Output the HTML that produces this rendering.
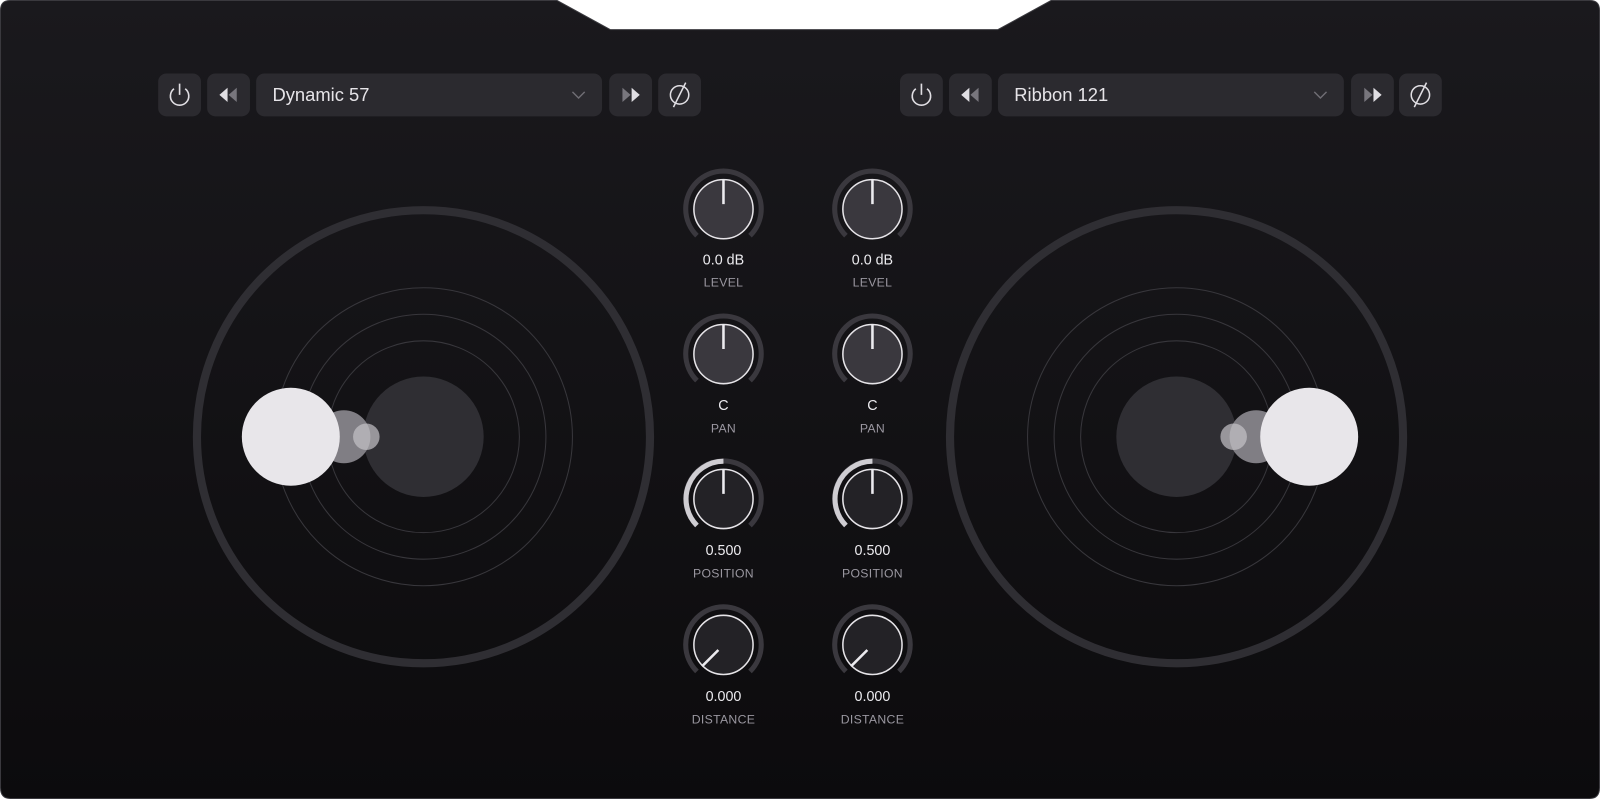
<!DOCTYPE html>
<html><head><style>
html,body{margin:0;padding:0;background:#fff;width:1600px;height:799px;overflow:hidden;font-family:"Liberation Sans",sans-serif}
#w{position:absolute;left:0;top:0;width:1568px;height:783px;transform:scale(1.020408);transform-origin:0 0}
.btn{position:absolute;top:72px;height:42px;background:#2b2a2f;border-radius:8px}
.dd{color:#e6e4e8;font-size:18px;line-height:42px;padding-left:16px;box-sizing:border-box}
.val{position:absolute;width:120px;text-align:center;color:#ecebef;font-size:14px}
.lab{position:absolute;width:120px;text-align:center;color:#9a97a0;font-size:12px;letter-spacing:0.3px}
</style></head><body><div id="w">
<svg width="1568" height="783" style="position:absolute;left:0;top:0">
<defs><linearGradient id="bg" x1="0" y1="0" x2="0" y2="1"><stop offset="0" stop-color="#1a191d"/><stop offset="1" stop-color="#0c0b0d"/></linearGradient></defs>
<path d="M10 0.5 H546 L598 29 H978 L1030 0.5 H1558 Q1567.5 0.5 1567.5 10 V772 Q1567.5 782.5 1558 782.5 H10 Q0.5 782.5 0.5 772 V10 Q0.5 0.5 10 0.5Z" fill="url(#bg)" stroke="#3a393e"/>
<g fill="none">
<circle cx="415" cy="428" r="222" stroke="#2f2e33" stroke-width="8"/>
<circle cx="415" cy="428" r="146" stroke="#38373c" stroke-width="1"/>
<circle cx="415" cy="428" r="120" stroke="#38373c" stroke-width="1"/>
<circle cx="415" cy="428" r="94" stroke="#38373c" stroke-width="1"/>
<circle cx="1153" cy="428" r="222" stroke="#2f2e33" stroke-width="8"/>
<circle cx="1153" cy="428" r="146" stroke="#38373c" stroke-width="1"/>
<circle cx="1153" cy="428" r="120" stroke="#38373c" stroke-width="1"/>
<circle cx="1153" cy="428" r="94" stroke="#38373c" stroke-width="1"/>
</g>
<circle cx="415" cy="428" r="59" fill="#2f2e33"/>
<circle cx="337" cy="428" r="26" fill="#807e84"/>
<circle cx="285" cy="428" r="48" fill="#e8e6ea"/>
<circle cx="359" cy="428" r="13" fill="#c5c3c8" opacity="0.7"/>
<circle cx="1153" cy="428" r="59" fill="#2f2e33"/>
<circle cx="1231" cy="428" r="26" fill="#807e84"/>
<circle cx="1283" cy="428" r="48" fill="#e8e6ea"/>
<circle cx="1209" cy="428" r="13" fill="#c5c3c8" opacity="0.7"/>
<g fill="none" stroke-width="5">
<g stroke="#3a383e">
<path d="M683 231 A37 37 0 1 1 735 231"/><path d="M829 231 A37 37 0 1 1 881 231"/>
<path d="M683 373 A37 37 0 1 1 735 373"/><path d="M829 373 A37 37 0 1 1 881 373"/>
<path d="M683 515 A37 37 0 1 1 735 515"/><path d="M829 515 A37 37 0 1 1 881 515"/>
<path d="M683 658 A37 37 0 1 1 735 658"/><path d="M829 658 A37 37 0 1 1 881 658"/>
</g>
<g stroke="#cfcdd2"><path d="M683 515 A37 37 0 0 1 709 452"/><path d="M829 515 A37 37 0 0 1 855 452"/></g>
</g>
<g stroke="#e6e4e8" stroke-width="1.5">
<circle cx="709" cy="205" r="29" fill="#3a383e"/><circle cx="855" cy="205" r="29" fill="#3a383e"/>
<circle cx="709" cy="347" r="29" fill="#3a383e"/><circle cx="855" cy="347" r="29" fill="#3a383e"/>
<circle cx="709" cy="489" r="29" fill="#232226"/><circle cx="855" cy="489" r="29" fill="#232226"/>
<circle cx="709" cy="632" r="29" fill="#232226"/><circle cx="855" cy="632" r="29" fill="#232226"/>
</g>
<g stroke="#ecebef" stroke-width="2.5">
<path d="M709 176V200M855 176V200M709 318V342M855 318V342M709 460V484M855 460V484M688 653L704 637M834 653L850 637"/>
</g>
</svg>
<div class="btn" style="left:155px;width:42px"><svg width="42" height="42"><path d="M15.5 15 A9 9 0 1 0 26.5 15" fill="none" stroke="#e0dee3" stroke-width="1.6"/><path d="M21 10V21" stroke="#e0dee3" stroke-width="1.6"/></svg></div>
<div class="btn" style="left:203px;width:42px"><svg width="42" height="42"><path d="M12 21L20 14V28Z" fill="#e0dee3"/><path d="M21 21L29 14V28Z" fill="#78767d"/></svg></div>
<div class="btn dd" style="left:251px;width:339px">Dynamic 57<svg width="14" height="10" style="position:absolute;right:16px;top:16px"><path d="M1 2L7 8L13 2" fill="none" stroke="#6f6d74" stroke-width="1.4"/></svg></div>
<div class="btn" style="left:597px;width:42px"><svg width="42" height="42"><path d="M13 14L21 21L13 28Z" fill="#78767d"/><path d="M22 14L30 21L22 28Z" fill="#e0dee3"/></svg></div>
<div class="btn" style="left:645px;width:42px"><svg width="42" height="42"><circle cx="21" cy="21" r="9" fill="none" stroke="#e0dee3" stroke-width="1.5"/><path d="M27 9L15 33" stroke="#e0dee3" stroke-width="1.5"/></svg></div>
<div class="btn" style="left:882px;width:42px"><svg width="42" height="42"><path d="M15.5 15 A9 9 0 1 0 26.5 15" fill="none" stroke="#e0dee3" stroke-width="1.6"/><path d="M21 10V21" stroke="#e0dee3" stroke-width="1.6"/></svg></div>
<div class="btn" style="left:930px;width:42px"><svg width="42" height="42"><path d="M12 21L20 14V28Z" fill="#e0dee3"/><path d="M21 21L29 14V28Z" fill="#78767d"/></svg></div>
<div class="btn dd" style="left:978px;width:339px">Ribbon 121<svg width="14" height="10" style="position:absolute;right:16px;top:16px"><path d="M1 2L7 8L13 2" fill="none" stroke="#6f6d74" stroke-width="1.4"/></svg></div>
<div class="btn" style="left:1324px;width:42px"><svg width="42" height="42"><path d="M13 14L21 21L13 28Z" fill="#78767d"/><path d="M22 14L30 21L22 28Z" fill="#e0dee3"/></svg></div>
<div class="btn" style="left:1371px;width:42px"><svg width="42" height="42"><circle cx="21" cy="21" r="9" fill="none" stroke="#e0dee3" stroke-width="1.5"/><path d="M27 9L15 33" stroke="#e0dee3" stroke-width="1.5"/></svg></div>

<div class="val" style="left:649px;top:246px">0.0 dB</div><div class="lab" style="left:649px;top:270px">LEVEL</div>
<div class="val" style="left:795px;top:246px">0.0 dB</div><div class="lab" style="left:795px;top:270px">LEVEL</div>
<div class="val" style="left:649px;top:389px">C</div><div class="lab" style="left:649px;top:413px">PAN</div>
<div class="val" style="left:795px;top:389px">C</div><div class="lab" style="left:795px;top:413px">PAN</div>
<div class="val" style="left:649px;top:531px">0.500</div><div class="lab" style="left:649px;top:555px">POSITION</div>
<div class="val" style="left:795px;top:531px">0.500</div><div class="lab" style="left:795px;top:555px">POSITION</div>
<div class="val" style="left:649px;top:674px">0.000</div><div class="lab" style="left:649px;top:698px">DISTANCE</div>
<div class="val" style="left:795px;top:674px">0.000</div><div class="lab" style="left:795px;top:698px">DISTANCE</div>
</div></body></html>
